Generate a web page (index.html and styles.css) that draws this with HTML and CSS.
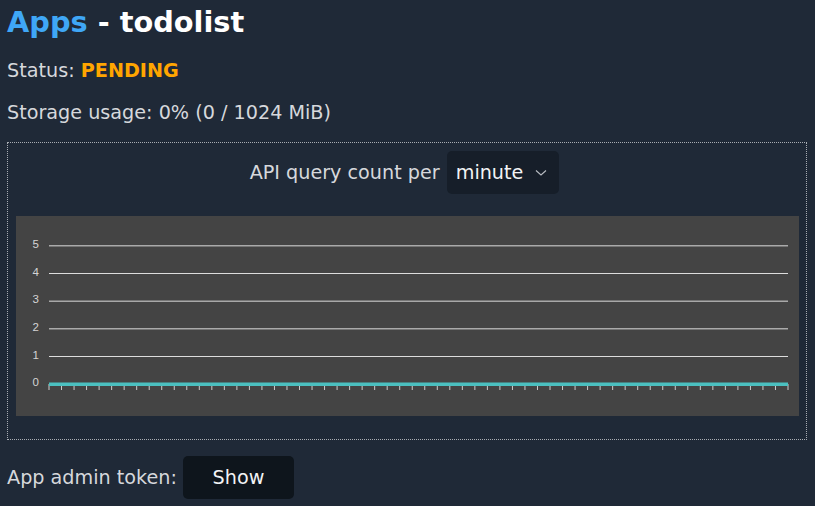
FILE: index.html
```html
<!DOCTYPE html>
<html>
<head>
<meta charset="utf-8">
<link rel="stylesheet" href="styles.css">
</head>
<body>
<h1 class="title"><span class="crumb">Apps</span> - todolist</h1>
<p class="line">Status: <span class="status">PENDING</span></p>
<p class="line last">Storage usage: 0% (0 / 1024 MiB)</p>
<div class="panel">
  <div class="panel-head">
    <span>API query count per</span>
    <div class="select">
      <span>minute</span>
      <svg class="chev" width="12" height="8" viewBox="0 0 12 8"><path d="M1 1.5 L6 6 L11 1.5" fill="none" stroke="#b8bcc2" stroke-width="1.1"/></svg>
    </div>
  </div>
  <div class="chart">
    <svg width="782" height="200" viewBox="0 0 782 200" id="chart">
      <g class="grid">
        <line x1="33" x2="772" y1="29.83" y2="29.83"/>
        <line x1="33" x2="772" y1="57.5" y2="57.5"/>
        <line x1="33" x2="772" y1="85.17" y2="85.17"/>
        <line x1="33" x2="772" y1="112.83" y2="112.83"/>
        <line x1="33" x2="772" y1="140.5" y2="140.5"/>
        <line x1="33" x2="772" y1="168.17" y2="168.17"/>
      </g>
      <g class="labels">
        <text x="23" y="32">5</text>
        <text x="23" y="59.5">4</text>
        <text x="23" y="87">3</text>
        <text x="23" y="115">2</text>
        <text x="23" y="142.5">1</text>
        <text x="23" y="170">0</text>
      </g>
      <g class="ticks" id="ticks"></g>
      <line class="series" x1="33" x2="772" y1="168.17" y2="168.17"/>
    </svg>
  </div>
</div>
<div class="token-row">
  <span>App admin token:</span>
  <button class="btn">Show</button>
</div>
<script>
  var g = document.getElementById('ticks');
  var ns = 'http://www.w3.org/2000/svg';
  for (var i = 0; i < 60; i++) {
    var x = 33 + i * (739 / 59);
    var l = document.createElementNS(ns, 'line');
    l.setAttribute('x1', x); l.setAttribute('x2', x);
    l.setAttribute('y1', 168); l.setAttribute('y2', 174);
    g.appendChild(l);
  }
</script>
</body>
</html>
```
FILE: styles.css
```css
html, body {
  margin: 0;
  padding: 0;
}
body {
  background: #1f2937;
  color: #d6d8dc;
  font-family: "DejaVu Sans", sans-serif;
  font-size: 19.2px;
  padding: 5px 8px 0 7px;
}
.title {
  margin: 0 0 20px;
  font-size: 28.8px;
  font-weight: bold;
  color: #ffffff;
  line-height: normal;
}
.crumb {
  color: #3fa7f6;
}
.line {
  margin: 19.2px 0;
  line-height: normal;
}
.line.last {
  margin-bottom: 18px;
}
.status {
  color: #ffa500;
  font-weight: bold;
}
.panel {
  margin-top: 18px;
  border: 1px dotted #a9adb3;
  padding: 8px 7px 23px 8px;
}
.panel-head {
  display: flex;
  justify-content: center;
  align-items: center;
  gap: 7px;
  margin-left: -6px;
}
.select {
  display: flex;
  align-items: center;
  height: 43px;
  box-sizing: border-box;
  padding: 0 12px 0 9px;
  background: #161e29;
  border-radius: 5px;
  color: #f2f3f5;
  gap: 12px;
}
.chev {
  display: block;
  margin-top: 1px;
}
.chart {
  margin-top: 22px;
  background: #444444;
  height: 200px;
}
.chart svg {
  display: block;
}
.grid line {
  stroke: #dddddd;
  stroke-width: 1;
}
.labels text {
  fill: #d4d4d4;
  font-family: "Liberation Sans", Arial, sans-serif;
  font-size: 11.5px;
  text-anchor: end;
}
.ticks line {
  stroke: #cccccc;
  stroke-width: 1;
}
.series {
  stroke: #4bc0c0;
  stroke-width: 3.5;
}
.token-row {
  display: flex;
  align-items: center;
  gap: 6px;
  margin-top: 16px;
}
.btn {
  font-family: "DejaVu Sans", sans-serif;
  font-size: 19.2px;
  color: #f2f3f5;
  background: #0e151c;
  border: none;
  border-radius: 5px;
  width: 111px;
  height: 43px;
  padding: 0;
}
```
